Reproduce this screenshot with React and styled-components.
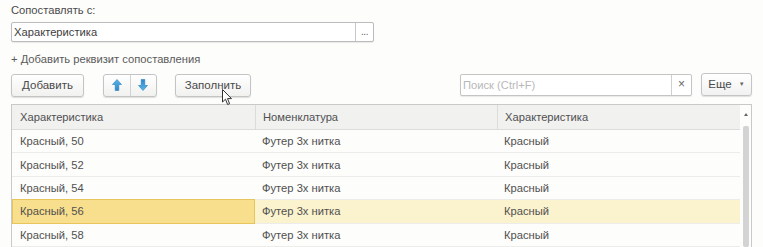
import React from 'react';
import styled, { createGlobalStyle } from 'styled-components';

const Global = createGlobalStyle`
  html, body { margin: 0; padding: 0; background: #fdfdfb; }
  body {
    font-family: "Liberation Sans", Arial, sans-serif;
    font-size: 11.2px;
    color: #505050;
  }
  * { box-sizing: border-box; }
`;

const Page = styled.div`
  position: relative;
  width: 763px;
  height: 247px;
  overflow: hidden;
  padding: 0 11px;
  display: flex;
  flex-direction: column;
`;

const Label = styled.div`
  height: 22px;
  padding-top: 3px;
  line-height: 15px;
  color: #4a4a4a;
`;

const Field = styled.div`
  display: flex;
  width: 363px;
  height: 20px;
  background: #fff;
  border: 1px solid #bcbcbc;
  border-radius: 2px;
  box-shadow: 0 1px 1px rgba(0, 0, 0, 0.08);
`;

const FieldText = styled.div`
  flex: 1;
  padding-left: 2px;
  line-height: 18px;
  color: #404040;
`;

const FieldButton = styled.div`
  width: 18px;
  border-left: 1px solid #c8c8c8;
  text-align: center;
  line-height: 18px;
  font-size: 10px;
  color: #666;
  letter-spacing: -0.5px;
`;

const AddLink = styled.div`
  height: 32px;
  display: flex;
  align-items: center;
  padding-top: 2px;
  color: #5a5a5a;
`;

const Toolbar = styled.div`
  height: 24px;
  display: flex;
  align-items: center;
`;

const Button = styled.div`
  height: 23px;
  width: ${(p) => p.$w}px;
  margin-left: ${(p) => p.$ml || 0}px;
  display: flex;
  align-items: center;
  justify-content: center;
  background: linear-gradient(#ffffff, #f1f1f0);
  border: 1px solid #c4c4c4;
  border-radius: 3px;
  box-shadow: 0 1px 1px rgba(0, 0, 0, 0.12);
  color: #4a4a4a;
  font-size: 11.5px;
`;

const ButtonGroup = styled.div`
  height: 23px;
  width: 54px;
  margin-left: 19px;
  display: flex;
  background: linear-gradient(#ffffff, #f1f1f0);
  border: 1px solid #c4c4c4;
  border-radius: 3px;
  box-shadow: 0 1px 1px rgba(0, 0, 0, 0.12);
`;

const GroupPart = styled.div`
  flex: 1;
  display: flex;
  align-items: center;
  justify-content: center;
  & + & { border-left: 1px solid #d2d2d2; }
`;

const Spacer = styled.div`
  flex: 1;
`;

const Search = styled.div`
  width: 232px;
  height: 22px;
  display: flex;
  background: #fff;
  border: 1px solid #c4c4c4;
  border-radius: 2px;
  box-shadow: 0 1px 1px rgba(0, 0, 0, 0.08);
`;

const SearchText = styled.div`
  flex: 1;
  padding-left: 2px;
  line-height: 20px;
  color: #b8b8b8;
`;

const SearchClear = styled.div`
  width: 20px;
  border-left: 1px solid #d0d0d0;
  text-align: center;
  line-height: 19px;
  font-size: 12px;
  color: #666;
`;

const MoreButton = styled(Button)`
  margin-left: 9px;
  height: 23px;
  margin-top: -2px;
  gap: 7px;
`;

const Caret = styled.span`
  font-size: 6px;
  color: #666;
`;

const Table = styled.div`
  margin-top: 7px;
  flex: 1;
  display: flex;
  border: 1px solid #c9c9c9;
  border-bottom: none;
  background: #fdfdfb;
`;

const TableMain = styled.div`
  flex: 1;
  display: flex;
  flex-direction: column;
`;

const Grid = styled.div`
  display: grid;
  grid-template-columns: 243px 242px 1fr;
`;

const HeaderRow = styled(Grid)`
  height: 25px;
  background: #f1f1f0;
  border-bottom: 1px solid #dcdcdc;
`;

const HeaderCell = styled.div`
  display: flex;
  align-items: center;
  padding-left: 8px;
  & + & { border-left: 1px solid #dcdcdc; padding-left: 7px; }
`;

const Row = styled(Grid)`
  height: 23.4px;
  border-bottom: 1px solid #ececea;
  background: ${(p) => (p.$selected ? '#fbf3cd' : 'transparent')};
`;

const Cell = styled.div`
  display: flex;
  align-items: center;
  padding-left: 8px;
  & + & { padding-left: 7px; }
`;

const CurrentCell = styled(Cell)`
  background: #f8df8d;
  border: 1px solid #e7c45c;
  margin: -1px 0 -1px 0;
  padding-left: 7px;
`;

const ScrollBar = styled.div`
  width: 11px;
  background: #fdfdfb;
  display: flex;
  flex-direction: column;
  align-items: center;
`;

const ScrollArrow = styled.div`
  margin-top: 8px;
  width: 0;
  height: 0;
  border-left: 2px solid transparent;
  border-right: 2px solid transparent;
  border-bottom: 3px solid #666;
`;

const ScrollThumb = styled.div`
  margin-top: 10px;
  width: 6px;
  flex: 1;
  background: #d3d3d3;
  border-radius: 2px;
`;

const Cursor = styled.svg`
  position: absolute;
  left: 222px;
  top: 89px;
`;

const ArrowIcon = ({ down }) => (
  <svg width="10" height="12" viewBox="0 0 10 12" style={down ? { transform: 'rotate(180deg)' } : undefined}>
    <defs>
      <linearGradient id={down ? 'gd' : 'gu'} x1="0" y1="0" x2="0" y2="1">
        <stop offset="0" stopColor="#5ab6ea" />
        <stop offset="1" stopColor="#2a86c8" />
      </linearGradient>
    </defs>
    <path d="M5 0.5 L9.5 5.5 L6.8 5.5 L6.8 11.5 L3.2 11.5 L3.2 5.5 L0.5 5.5 Z" fill={`url(#${down ? 'gd' : 'gu'})`} stroke="#2b7fbf" strokeWidth="0.6" />
  </svg>
);

const rows = [
  ['Красный, 50', 'Футер 3х нитка', 'Красный'],
  ['Красный, 52', 'Футер 3х нитка', 'Красный'],
  ['Красный, 54', 'Футер 3х нитка', 'Красный'],
  ['Красный, 56', 'Футер 3х нитка', 'Красный'],
  ['Красный, 58', 'Футер 3х нитка', 'Красный'],
];

export default function App() {
  return (
    <>
      <Global />
      <Page>
        <Label>Сопоставлять с:</Label>
        <Field>
          <FieldText>Характеристика</FieldText>
          <FieldButton>...</FieldButton>
        </Field>
        <AddLink>+ Добавить реквизит сопоставления</AddLink>
        <Toolbar>
          <Button $w={73}>Добавить</Button>
          <ButtonGroup>
            <GroupPart><ArrowIcon /></GroupPart>
            <GroupPart><ArrowIcon down /></GroupPart>
          </ButtonGroup>
          <Button $w={76} $ml={18}>Заполнить</Button>
          <Spacer />
          <Search>
            <SearchText>Поиск (Ctrl+F)</SearchText>
            <SearchClear>×</SearchClear>
          </Search>
          <MoreButton $w={51}>Еще <Caret>▼</Caret></MoreButton>
        </Toolbar>
        <Table>
          <TableMain>
            <HeaderRow>
              <HeaderCell>Характеристика</HeaderCell>
              <HeaderCell>Номенклатура</HeaderCell>
              <HeaderCell>Характеристика</HeaderCell>
            </HeaderRow>
            {rows.map((r, i) => {
              const sel = i === 3;
              return (
                <Row key={i} $selected={sel}>
                  {sel ? <CurrentCell>{r[0]}</CurrentCell> : <Cell>{r[0]}</Cell>}
                  <Cell>{r[1]}</Cell>
                  <Cell>{r[2]}</Cell>
                </Row>
              );
            })}
          </TableMain>
          <ScrollBar>
            <ScrollArrow />
            <ScrollThumb />
          </ScrollBar>
        </Table>
        <Cursor width="12" height="17" viewBox="0 0 12 17">
          <path d="M0.5 0.5 L0.5 13 L3.5 10.2 L5.6 15.5 L7.6 14.7 L5.5 9.6 L9.5 9.6 Z" fill="#fff" stroke="#333" strokeWidth="1" strokeLinejoin="round" />
        </Cursor>
      </Page>
    </>
  );
}
